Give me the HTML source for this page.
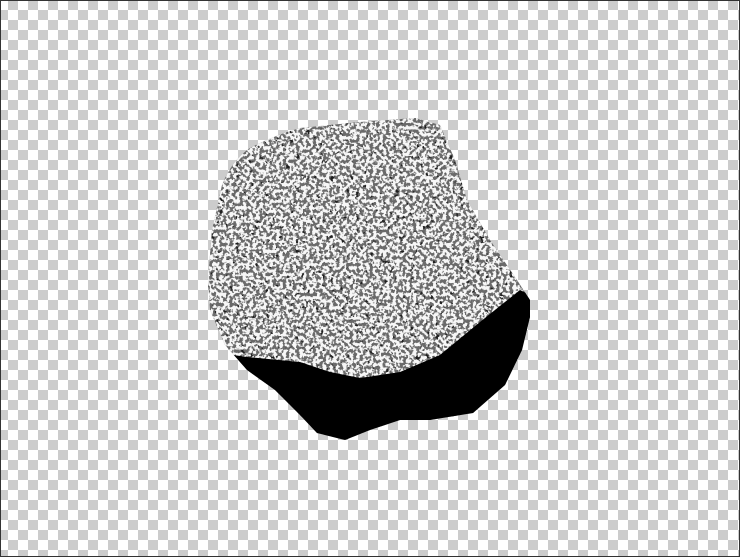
<!DOCTYPE html>
<html><head><style>
html,body{margin:0;padding:0;width:740px;height:557px;overflow:hidden;}
body{background-color:#fff;
background-image:linear-gradient(45deg,#ccc 25%,transparent 25%,transparent 75%,#ccc 75%),linear-gradient(45deg,#ccc 25%,transparent 25%,transparent 75%,#ccc 75%);
background-size:20px 20px;background-position:-2px 0,8px 10px;}
svg{position:absolute;left:0;top:0;}
.frame{position:absolute;left:0;top:0;width:738px;height:555px;border:1px solid #333;}
</style></head><body>
<svg width="740" height="557" viewBox="0 0 740 557">
<defs>
<filter id="n" x="0" y="0" width="100%" height="100%">
<feTurbulence type="fractalNoise" baseFrequency="0.3" numOctaves="2" seed="3" result="t"/>
<feColorMatrix in="t" type="matrix" values="0 0 0 0 0  0 0 0 0 0  0 0 0 0 0  0 0 0 -10 5.6" result="a"/>
<feFlood flood-color="#fff"/>
<feComposite operator="in" in2="a" result="w"/>
<feComposite operator="in" in2="SourceGraphic"/>
</filter>
<filter id="d" x="0" y="0" width="100%" height="100%">
<feTurbulence type="fractalNoise" baseFrequency="0.2" numOctaves="2" seed="9" result="t"/>
<feColorMatrix in="t" type="matrix" values="0 0 0 0 0  0 0 0 0 0  0 0 0 0 0  0 0 0 -14 5" result="a"/>
<feFlood flood-color="#000"/>
<feComposite operator="in" in2="a" result="w"/>
<feComposite operator="in" in2="SourceGraphic"/>
</filter>
<clipPath id="c"><path d="M250,148 Q275,135 300,128 L360,122 L415,118 L440,125 L455,160 L467,200 L490,240 L517,280 L530,300 L530,317 L522,350 L505,385 L473,413 L430,420 L400,420 L370,430 L345,440 L317,433 L300,415 L275,390 L247,370 L225,345 L210,310 L208,280 L212,230 L222,185 Q232,160 250,148 Z"/></clipPath>
</defs>
<g clip-path="url(#c)">
<rect x="200" y="110" width="340" height="340" fill="#6a6a6a"/>
<rect x="200" y="110" width="340" height="340" fill="#000" filter="url(#d)" opacity="0.7"/>
<rect x="200" y="110" width="340" height="340" fill="#fff" filter="url(#n)" opacity="0.95"/>
<path d="M200,350 L247,357 L300,362 L330,372 L360,378 L400,372 L440,355 L480,322 L520,290 L540,300 L540,450 L200,450 Z" fill="#000"/>
<path d="M300,420 L320,395 L360,380 L330,372 L300,365 Z" fill="#000" opacity="0.6"/>
</g>
</svg>
<div class="frame"></div>
</body></html>
